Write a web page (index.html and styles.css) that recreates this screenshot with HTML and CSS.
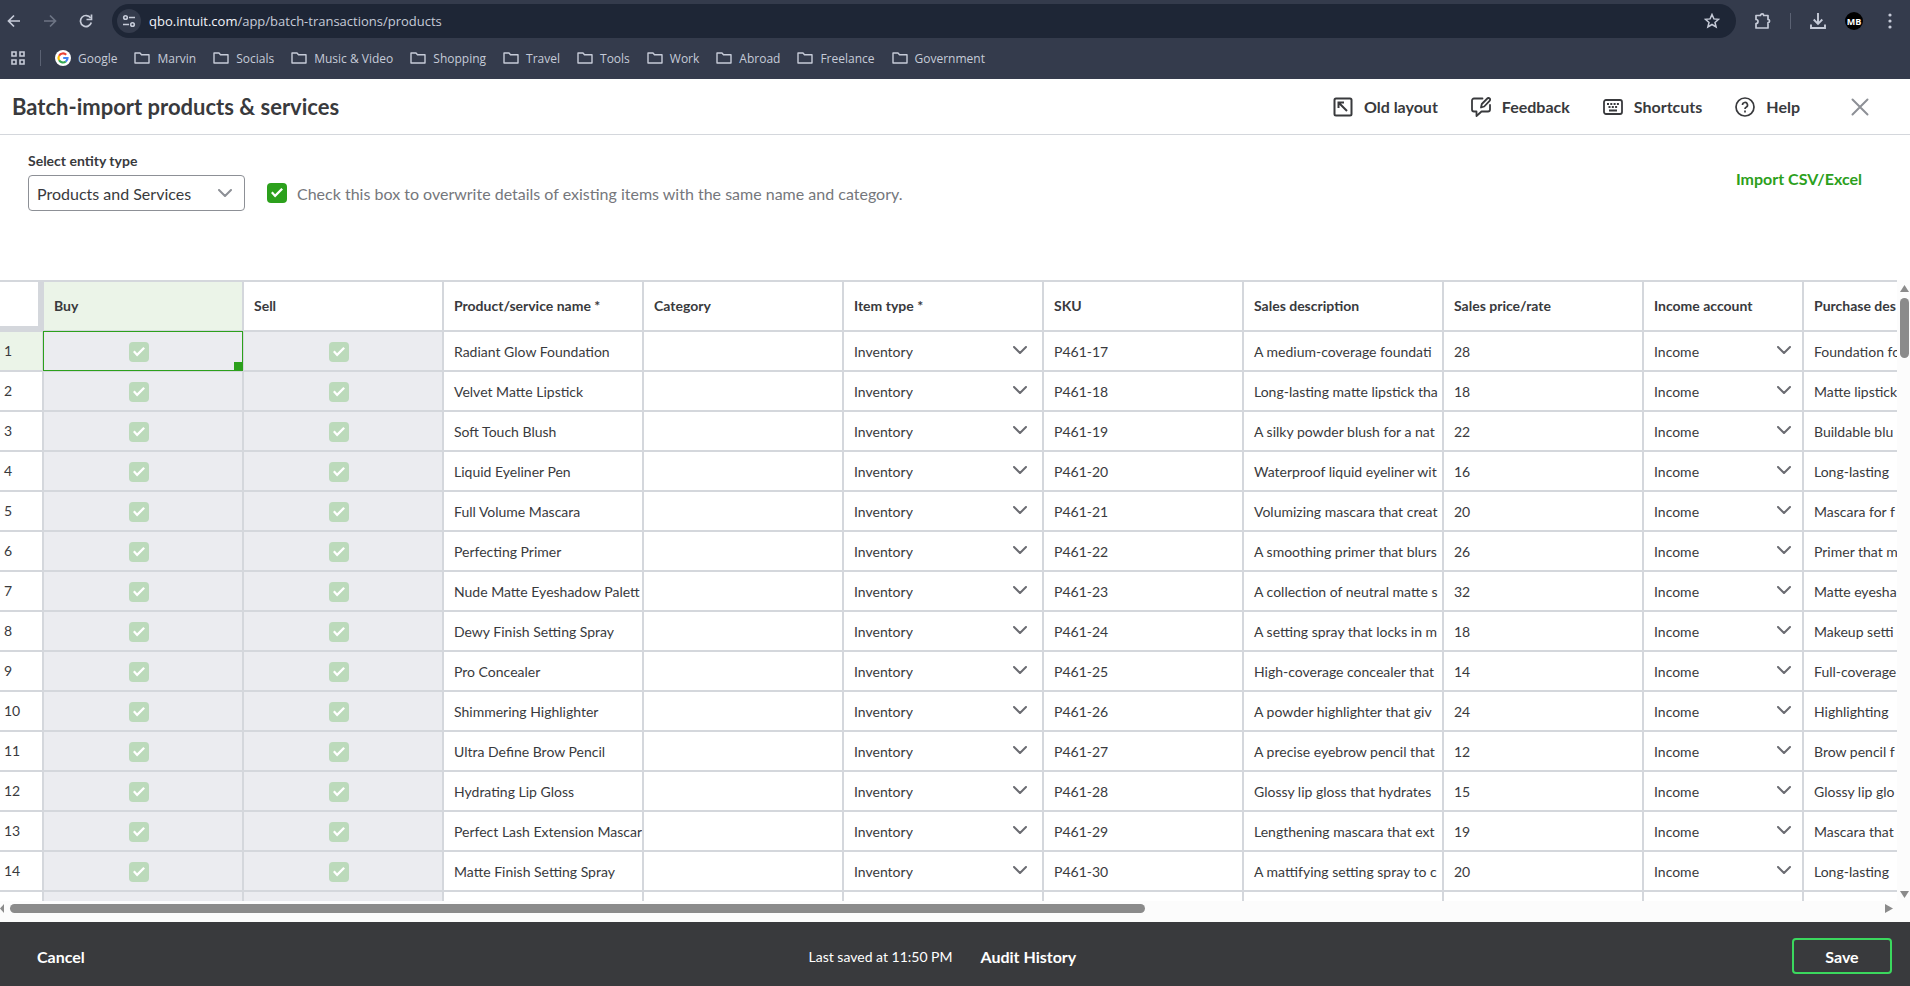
FILE: index.html
```
<!DOCTYPE html>
<html lang="en">
<head>
    <meta charset="UTF-8">
    <meta name="viewport" content="width=device-width, initial-scale=1.0">
    <title>Batch-import products &amp; services</title>
    <link rel="stylesheet" href="styles.css">
</head>
<body>
    <svg class="sprite" aria-hidden="true">
        <symbol id="folder" viewBox="0 0 16 14"><path d="M1 12V2h5l1.500 1.800H15V12z" fill="none" stroke="currentColor" stroke-width="1.4" stroke-linejoin="round"/></symbol>
        <symbol id="chevron" viewBox="0 0 14 8"><path d="M1 1l6 6 6-6" fill="none" stroke="currentColor" stroke-width="2" stroke-linecap="round" stroke-linejoin="round"/></symbol>
    </svg>

    <div class="browser">
        <div class="toolbar">
            <div class="nav-buttons">
                <button aria-label="Back"><svg width="14" height="14" viewBox="0 0 14 14"><path d="M13 7H2M7 1.5L1.5 7 7 12.5" fill="none" stroke="currentColor" stroke-width="1.7"/></svg></button>
                <button class="dim" aria-label="Forward"><svg width="14" height="14" viewBox="0 0 14 14"><path d="M1 7h11M7 1.5L12.5 7 7 12.5" fill="none" stroke="currentColor" stroke-width="1.7"/></svg></button>
                <button aria-label="Reload"><svg width="14" height="14" viewBox="0 0 14 14"><path d="M12.300 8.500A5.500 5.500 0 1 1 11.600 4" fill="none" stroke="currentColor" stroke-width="1.7"/><path d="M12.500 0.500v5h-5" fill="none" stroke="currentColor" stroke-width="1.7"/></svg></button>
            </div>
            <div class="omnibox">
                <button class="site-info" aria-label="Site information"><svg width="14" height="14" viewBox="0 0 14 14" fill="none" stroke="currentColor" stroke-width="1.6"><circle cx="3.5" cy="3.5" r="1.8"/><path d="M7 3.5h6M1 10.5h6"/><circle cx="10.5" cy="10.5" r="1.8"/></svg></button>
                <span class="url"><b>qbo.intuit.com</b>/app/batch-transactions/products</span>
                <button class="star" aria-label="Bookmark this tab"><svg width="16" height="16" viewBox="0 0 16 16"><path d="M8 1.500l1.900 4.400 4.700.4-3.600 3.100 1.100 4.600L8 11.500 3.900 14 5 9.400 1.400 6.300l4.700-.4z" fill="none" stroke="currentColor" stroke-width="1.5"/></svg></button>
            </div>
            <div class="browser-actions">
                <button aria-label="Extensions"><svg width="18" height="18" viewBox="0 0 18 18"><path d="M2 3.500h4.500a1.600 1.600 0 0 1 3.200 0H14v4a1.600 1.600 0 0 1 0 3.200V16H2v-4.500a2 2 0 0 0 0-4z" fill="none" stroke="currentColor" stroke-width="1.7" stroke-linejoin="round"/></svg></button>
                <span class="divider"></span>
                <button aria-label="Downloads"><svg width="18" height="18" viewBox="0 0 18 18"><path d="M9 1v10.500M4.700 7.500L9 11.800l4.300-4.300M2 12.500V16h14v-3.500" fill="none" stroke="currentColor" stroke-width="1.9"/></svg></button>
                <button class="avatar" aria-label="Profile">MB</button>
                <button aria-label="Menu"><svg width="18" height="18" viewBox="0 0 18 18" fill="currentColor"><circle cx="9" cy="3" r="1.6"/><circle cx="9" cy="9" r="1.6"/><circle cx="9" cy="15" r="1.6"/></svg></button>
            </div>
        </div>
        <nav class="bookmarks">
            <button class="apps" aria-label="Apps"><svg width="14" height="14" viewBox="0 0 14 14" fill="none" stroke="currentColor" stroke-width="1.6"><path d="M1 1h4v4H1zM9 1h4v4H9zM1 9h4v4H1zM9 9h4v4H9z"/></svg></button>
            <span class="divider"></span>
            <a href="#"><svg width="16" height="16" viewBox="0 0 16 16"><circle cx="8" cy="8" r="8" fill="#fff"/><g fill="none" stroke-width="2.2"><path d="M11.200 4.800A4.500 4.500 0 0 0 4.100 5.700" stroke="#ea4335"/><path d="M4.100 5.700a4.500 4.500 0 0 0 0 4.600" stroke="#fbbc05"/><path d="M4.100 10.300a4.500 4.500 0 0 0 6.700 1.200" stroke="#34a853"/><path d="M10.800 11.500A4.500 4.500 0 0 0 12.500 8H8.200" stroke="#4285f4"/></g></svg>Google</a>
            <a href="#"><svg class="folder"><use href="#folder"/></svg>Marvin</a>
            <a href="#"><svg class="folder"><use href="#folder"/></svg>Socials</a>
            <a href="#"><svg class="folder"><use href="#folder"/></svg>Music &amp; Video</a>
            <a href="#"><svg class="folder"><use href="#folder"/></svg>Shopping</a>
            <a href="#"><svg class="folder"><use href="#folder"/></svg>Travel</a>
            <a href="#"><svg class="folder"><use href="#folder"/></svg>Tools</a>
            <a href="#"><svg class="folder"><use href="#folder"/></svg>Work</a>
            <a href="#"><svg class="folder"><use href="#folder"/></svg>Abroad</a>
            <a href="#"><svg class="folder"><use href="#folder"/></svg>Freelance</a>
            <a href="#"><svg class="folder"><use href="#folder"/></svg>Government</a>
        </nav>
    </div>

    <header class="header">
        <h1>Batch-import products &amp; services</h1>
        <div class="header-actions">
            <button><svg width="20" height="20" viewBox="0 0 20 20" fill="none" stroke="currentColor" stroke-width="2"><rect x="1.5" y="1.5" width="17" height="17" rx="1.5"/><path d="M14 14L6 6M5.500 11V5.500H11"/></svg>Old layout</button>
            <button><svg width="20" height="20" viewBox="0 0 20 20" fill="none" stroke="currentColor" stroke-width="1.8" stroke-linejoin="round" stroke-linecap="round"><path d="M11.500 1.500H3a2 2 0 0 0-2 2v9a2 2 0 0 0 2 2h2.500V19l5-4.500H17a2 2 0 0 0 2-2V8"/><path d="M10 10.500l.8-3.500 5.500-5.500a1.500 1.500 0 0 1 2.300 2.300L13.200 9.500z"/></svg>Feedback</button>
            <button><svg width="20" height="20" viewBox="0 0 20 20" fill="none" stroke="currentColor" stroke-width="1.8"><rect x="1" y="3" width="18" height="14" rx="2"/><path d="M4 7h2m1.300 0h2m1.300 0h2m1.300 0h2M5.500 10h2m1.300 0h2m1.300 0h2M6 13.500h8"/></svg>Shortcuts</button>
            <button><svg width="20" height="20" viewBox="0 0 20 20" fill="none" stroke="currentColor" stroke-width="1.7"><circle cx="10" cy="10" r="9"/><path d="M7.500 8a2.500 2.500 0 1 1 3.600 2.200c-.8.400-1.100.8-1.100 1.800M10 13.500v2"/></svg>Help</button>
            <button class="close" aria-label="Close"><svg width="18" height="18" viewBox="0 0 18 18"><path d="M1.500 1.500l15 15M16.500 1.500l-15 15" stroke="currentColor" stroke-width="2" stroke-linecap="round"/></svg></button>
        </div>
    </header>

    <section class="options">
        <div class="field">
            <label for="entity">Select entity type</label>
            <div class="select-box">
                <select id="entity"><option>Products and Services</option></select>
                <svg class="chevron"><use href="#chevron"/></svg>
            </div>
        </div>
        <label class="overwrite"><input type="checkbox" class="check" checked>Check this box to overwrite details of existing items with the same name and category.</label>
        <a class="import" href="#">Import CSV/Excel</a>
    </section>

    <main class="sheet">
        <div class="sheet-view">
            <table>
                <colgroup>
                    <col class="col-number">
                    <col span="8">
                    <col class="col-account">
                    <col>
                </colgroup>
                <thead>
                    <tr>
                        <td class="corner"></td>
                        <th class="active">Buy</th>
                        <th>Sell</th>
                        <th>Product/service name *</th>
                        <th>Category</th>
                        <th>Item type *</th>
                        <th>SKU</th>
                        <th>Sales description</th>
                        <th>Sales price/rate</th>
                        <th>Income account</th>
                        <th>Purchase des</th>
                    </tr>
                </thead>
                <tbody id="rows"></tbody>
            </table>
        </div>
        <div class="scroll-y">
            <span class="arrow up"></span>
            <span class="thumb"></span>
            <span class="arrow down"></span>
        </div>
        <div class="scroll-x">
            <span class="arrow left"></span>
            <span class="track"><span class="thumb"></span></span>
            <span class="arrow right"></span>
        </div>
    </main>

    <footer class="footer">
        <button class="plain">Cancel</button>
        <div class="status">
            <span>Last saved at 11:50 PM</span>
            <button class="plain">Audit History</button>
        </div>
        <button class="save">Save</button>
    </footer>

    <script>
        const products = [
            ['Radiant Glow Foundation', 'P461-17', 'A medium-coverage foundati', 28, 'Foundation fo'],
            ['Velvet Matte Lipstick', 'P461-18', 'Long-lasting matte lipstick tha', 18, 'Matte lipstick'],
            ['Soft Touch Blush', 'P461-19', 'A silky powder blush for a nat', 22, 'Buildable blu'],
            ['Liquid Eyeliner Pen', 'P461-20', 'Waterproof liquid eyeliner wit', 16, 'Long-lasting'],
            ['Full Volume Mascara', 'P461-21', 'Volumizing mascara that creat', 20, 'Mascara for f'],
            ['Perfecting Primer', 'P461-22', 'A smoothing primer that blurs', 26, 'Primer that m'],
            ['Nude Matte Eyeshadow Palett', 'P461-23', 'A collection of neutral matte s', 32, 'Matte eyesha'],
            ['Dewy Finish Setting Spray', 'P461-24', 'A setting spray that locks in m', 18, 'Makeup setti'],
            ['Pro Concealer', 'P461-25', 'High-coverage concealer that', 14, 'Full-coverage'],
            ['Shimmering Highlighter', 'P461-26', 'A powder highlighter that giv', 24, 'Highlighting'],
            ['Ultra Define Brow Pencil', 'P461-27', 'A precise eyebrow pencil that', 12, 'Brow pencil f'],
            ['Hydrating Lip Gloss', 'P461-28', 'Glossy lip gloss that hydrates', 15, 'Glossy lip glo'],
            ['Perfect Lash Extension Mascar', 'P461-29', 'Lengthening mascara that ext', 19, 'Mascara that'],
            ['Matte Finish Setting Spray', 'P461-30', 'A mattifying setting spray to c', 20, 'Long-lasting']
        ];

        function checkCell(label, active) {
            return `<td class="locked${active ? ' selected' : ''}"><input type="checkbox" class="check" aria-label="${label}" checked disabled></td>`;
        }

        function selectCell(label, value, type) {
            return `<td><div class="cell-select ${type}"><select aria-label="${label}"><option>${value}</option></select><svg class="chevron"><use href="#chevron"/></svg></div></td>`;
        }

        const rows = products.map(([name, sku, description, price, purchase], i) => `
            <tr>
                <th class="number${i === 0 ? ' active' : ''}" scope="row">${i + 1}</th>
                ${checkCell('Buy ' + name, i === 0)}
                ${checkCell('Sell ' + name)}
                <td>${name}</td>
                <td></td>
                ${selectCell('Item type', 'Inventory', 'item-type')}
                <td>${sku}</td>
                <td>${description}</td>
                <td>${price}</td>
                ${selectCell('Income account', 'Income', 'account')}
                <td>${purchase}</td>
            </tr>`);

        // empty row at the bottom, cut off by the scroll area
        rows.push('<tr><td class="number"></td><td class="locked"></td><td class="locked"></td>' + '<td></td>'.repeat(8) + '</tr>');
        document.getElementById('rows').innerHTML = rows.join('');
    </script>
</body>
</html>
```
FILE: styles.css
```
* {
    box-sizing: border-box;
}
body {
    margin: 0;
    height: 100vh;
    display: flex;
    flex-direction: column;
    overflow: hidden;
    background-color: #fff;
    color: #393a3d;
    font-family: Lato, "Open Sans", sans-serif;
    font-size: 14px;
}
button, select, input {
    font: inherit;
    color: inherit;
    margin: 0;
}
button {
    display: flex;
    align-items: center;
    justify-content: center;
    background: none;
    border: none;
    padding: 0;
    cursor: pointer;
}
a {
    text-decoration: none;
    color: inherit;
}
svg {
    flex-shrink: 0;
}
.sprite {
    display: none;
}

/* browser bars */
.browser {
    background-color: #343b4c;
    color: #c6cbd8;
    font-family: "Open Sans", "Noto Sans", sans-serif;
    height: 79px;
    padding-top: 4px;
}
.toolbar {
    display: flex;
    align-items: center;
    height: 34px;
    padding: 0 11px 0 7px;
}
.nav-buttons {
    display: flex;
    gap: 22px;
    margin-right: 19px;
}
.dim {
    color: #6d7484;
}
.omnibox {
    flex: 1;
    display: flex;
    align-items: center;
    height: 34px;
    margin-right: 18px;
    padding: 0 16px 0 5px;
    background-color: #1e2636;
    border-radius: 17px;
}
.site-info {
    width: 24px;
    height: 24px;
    margin-right: 8px;
    border-radius: 50%;
    background-color: #343b4c;
}
.url {
    flex: 1;
    font-size: 13px;
}
.url b {
    font-weight: 400;
    color: #f2f4fa;
}
.browser-actions {
    display: flex;
    align-items: center;
    gap: 18px;
}
.divider {
    width: 1px;
    height: 16px;
    background-color: #5b6273;
}
.avatar {
    width: 18px;
    height: 18px;
    border-radius: 50%;
    background-color: #000;
    color: #fff;
    font-size: 9px;
    font-weight: 700;
}
.bookmarks {
    display: flex;
    align-items: center;
    height: 40px;
    padding-left: 11px;
    font-size: 12px;
}
.bookmarks a {
    display: flex;
    align-items: center;
    gap: 7px;
    margin-right: 17px;
}
.bookmarks .divider {
    margin: 0 14px 0 15px;
}
.folder {
    width: 16px;
    height: 14px;
}

/* page header */
.header {
    display: flex;
    align-items: center;
    justify-content: space-between;
    height: 56px;
    padding: 0 41px 0 12px;
    border-bottom: 1px solid #d4d7dc;
}
.header h1 {
    margin: 0;
    font-size: 22px;
    font-weight: 700;
}
.header-actions {
    display: flex;
    align-items: center;
    gap: 33px;
}
.header-actions button {
    gap: 11px;
    font-size: 16px;
    font-weight: 700;
}
.header-actions .close {
    margin-left: 18px;
    color: #8d9096;
}

/* entity type and overwrite option */
.options {
    display: flex;
    align-items: flex-start;
    height: 145px;
    padding: 16px 48px 0 28px;
    font-size: 16px;
}
.field {
    display: flex;
    flex-direction: column;
    gap: 4px;
}
.field label {
    font-size: 14px;
    line-height: 20px;
    font-weight: 700;
}
.select-box, .cell-select {
    display: grid;
    align-items: center;
}
.select-box select, .cell-select select {
    grid-area: 1 / 1;
    width: 100%;
    appearance: none;
    background: none;
    border: none;
    padding: 0;
}
.select-box .chevron, .cell-select .chevron {
    grid-area: 1 / 1;
    justify-self: end;
    width: 14px;
    height: 8px;
    color: #6b6c72;
    pointer-events: none;
}
.select-box {
    width: 217px;
}
.select-box select {
    height: 36px;
    padding: 0 8px;
    border: 1px solid #8d9096;
    border-radius: 4px;
}
.select-box .chevron {
    margin-right: 13px;
    color: #8d9096;
}
.overwrite {
    display: flex;
    align-items: center;
    gap: 10px;
    margin: 32px 0 0 22px;
    color: #75777c;
}
.import {
    margin: 18px 0 0 auto;
    line-height: 20px;
    font-weight: 700;
    color: #2ca01c;
}
.check {
    appearance: none;
    display: grid;
    place-items: center;
    width: 20px;
    height: 20px;
    border-radius: 4px;
    background-color: #2ca01c;
}
.check::before {
    content: "";
    width: 12px;
    height: 10px;
    background-color: #fff;
    clip-path: polygon(0 50%, 14% 34%, 34% 62%, 86% 0, 100% 16%, 34% 96%);
}
.check:disabled {
    background-color: #bcdabb;
}

/* spreadsheet */
.sheet {
    flex: 1;
    min-height: 0;
    display: grid;
    grid-template-columns: 1fr 13px;
    grid-template-rows: 1fr 21px;
    background-color: #fcfcfc;
}
.sheet-view {
    min-width: 0;
    min-height: 0;
    overflow: hidden;
    background-color: #fff;
    border-top: 2px solid #d4d7dc;
}
.sheet table {
    table-layout: fixed;
    width: 2004px;
    border-collapse: separate;
    border-spacing: 0;
}
.sheet col {
    width: 200px;
}
.sheet .col-number {
    width: 44px;
}
.sheet .col-account {
    width: 160px;
}
.sheet th, .sheet td {
    height: 40px;
    padding: 0 0 0 10px;
    border-right: 2px solid #d4d7dc;
    border-bottom: 2px solid #d4d7dc;
    overflow: hidden;
    white-space: nowrap;
    text-align: left;
}
.sheet thead th, .sheet thead td {
    height: 50px;
    padding-bottom: 2px;
    font-weight: 700;
}
.sheet .corner {
    border-right-width: 6px;
    border-bottom-width: 6px;
}
.sheet .active {
    background-color: #ebf4e8;
}
.sheet .number {
    padding: 0 0 2px 4px;
    font-weight: 400;
}
.sheet .locked {
    padding: 2px 8px 0 0;
    background-color: #ebecf0;
}
.locked .check {
    margin: 0 auto;
}
.sheet .selected {
    position: relative;
    overflow: visible;
}
.selected::before {
    content: "";
    position: absolute;
    inset: -1px;
    border: 1px solid #2ca01c;
}
.selected::after {
    content: "";
    position: absolute;
    right: -1px;
    bottom: -1px;
    width: 9px;
    height: 9px;
    background-color: #2ca01c;
}
.cell-select .chevron {
    margin-bottom: 3px;
}
.item-type .chevron {
    margin-right: 15px;
}
.account .chevron {
    margin-right: 11px;
}

/* scrollbars */
.scroll-y {
    display: flex;
    flex-direction: column;
    align-items: flex-end;
    padding: 5px 1px 3px 0;
}
.scroll-y .thumb {
    width: 9px;
    height: 60px;
    margin-top: 6px;
    border-radius: 5px;
    background-color: #8b8b8b;
}
.scroll-x {
    display: flex;
    align-items: flex-start;
    padding: 3px 4px 0 0;
}
.scroll-x .track {
    flex: 1;
    margin: 0 5px 0 6px;
}
.scroll-x .thumb {
    display: block;
    width: 60.7%;
    height: 9px;
    border-radius: 5px;
    background-color: #8b8b8b;
}
.arrow {
    width: 9px;
    height: 7px;
    background-color: #8b8b8b;
}
.up {
    clip-path: polygon(50% 0, 100% 100%, 0 100%);
}
.down {
    margin-top: auto;
    clip-path: polygon(0 0, 100% 0, 50% 100%);
}
.left {
    width: 4px;
    height: 9px;
    clip-path: polygon(100% 0, 100% 100%, 0 50%);
}
.right {
    width: 8px;
    height: 9px;
    clip-path: polygon(0 0, 100% 50%, 0 100%);
}

/* footer */
.footer {
    display: flex;
    align-items: center;
    justify-content: space-between;
    height: 64px;
    padding: 4px 18px 0 37px;
    background-color: #393a3d;
    color: #fff;
}
.plain, .save {
    font-size: 16px;
    font-weight: 700;
}
.status {
    display: flex;
    align-items: center;
    gap: 28px;
    margin-left: 8px;
}
.save {
    width: 100px;
    height: 36px;
    border: 2px solid #3bd85e;
    border-radius: 4px;
}
```
